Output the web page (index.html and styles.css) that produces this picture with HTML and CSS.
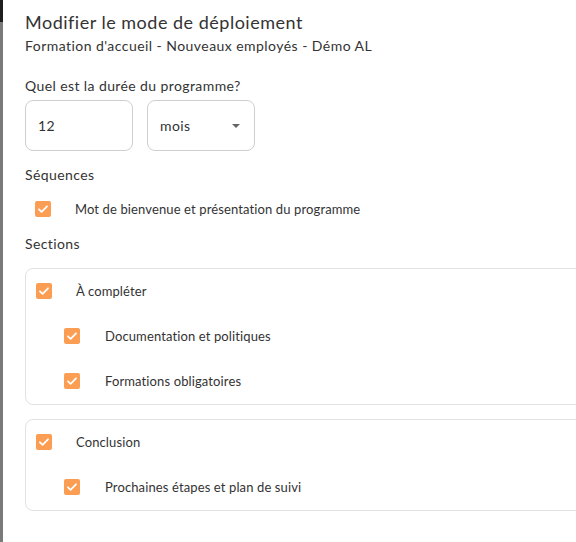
FILE: index.html
```html
<!DOCTYPE html>
<html lang="fr">
<head>
<meta charset="UTF-8" />
<title>Modifier le mode de déploiement</title>
<link rel="stylesheet" href="styles.css">
</head>
<body>
<div class="backdrop"><div class="backdrop-top"></div></div>

<div class="dialog">
  <h1>Modifier le mode de déploiement</h1>
  <p class="subtitle">Formation d'accueil - Nouveaux employés - Démo AL</p>

  <p class="label duration-label">Quel est la durée du programme?</p>
  <div class="duration">
    <div class="field">12</div>
    <div class="field select">mois <span class="caret"></span></div>
  </div>

  <p class="label">Séquences</p>
  <div class="check-row seq">
    <span class="cb"><svg viewBox="0 0 16 16"><path d="M4 8.3l2.6 2.5L12 5.3" /></svg></span>
    <span>Mot de bienvenue et présentation du programme</span>
  </div>

  <p class="label">Sections</p>

  <div class="section-box">
    <div class="check-row parent">
      <span class="cb"><svg viewBox="0 0 16 16"><path d="M4 8.3l2.6 2.5L12 5.3" /></svg></span>
      <span>À compléter</span>
    </div>
    <div class="check-row child">
      <span class="cb"><svg viewBox="0 0 16 16"><path d="M4 8.3l2.6 2.5L12 5.3" /></svg></span>
      <span>Documentation et politiques</span>
    </div>
    <div class="check-row child">
      <span class="cb"><svg viewBox="0 0 16 16"><path d="M4 8.3l2.6 2.5L12 5.3" /></svg></span>
      <span>Formations obligatoires</span>
    </div>
  </div>

  <div class="section-box">
    <div class="check-row parent">
      <span class="cb"><svg viewBox="0 0 16 16"><path d="M4 8.3l2.6 2.5L12 5.3" /></svg></span>
      <span>Conclusion</span>
    </div>
    <div class="check-row child">
      <span class="cb"><svg viewBox="0 0 16 16"><path d="M4 8.3l2.6 2.5L12 5.3" /></svg></span>
      <span>Prochaines étapes et plan de suivi</span>
    </div>
  </div>
</div>
</body>
</html>
```

FILE: styles.css
```css
html, body {
  margin: 0;
  height: 100%;
}
body {
  display: flex;
  background: #fff;
  font-family: "Lato", "Open Sans", sans-serif;
  color: #333;
  overflow: hidden;
}
.backdrop {
  width: 3px;
  flex: none;
  background: #7a7a7a;
}
.backdrop-top {
  height: 22px;
  background: #1e1e1e;
}
.dialog {
  flex: none;
  width: 620px;
  padding: 10px 0 0 22px;
}
h1 {
  margin: 0;
  font-size: 18px;
  font-weight: 400;
  line-height: 24px;
  letter-spacing: 0.5px;
  color: #333;
}
.subtitle {
  margin: 0;
  font-size: 14px;
  line-height: 24px;
  letter-spacing: 0.45px;
}
.label {
  margin: 0;
  font-size: 14px;
  line-height: 20px;
  letter-spacing: 0.4px;
}
.duration-label {
  margin-top: 18px;
}
.duration {
  display: flex;
  gap: 14px;
  margin: 4px 0 14px;
}
.field {
  box-sizing: border-box;
  width: 108px;
  height: 51px;
  border: 1px solid #cfcfcf;
  border-radius: 8px;
  padding: 0 0 0 12px;
  display: flex;
  align-items: center;
  font-size: 14px;
  letter-spacing: 0.4px;
}
.select {
  justify-content: space-between;
  padding-right: 12px;
}
.caret {
  width: 0;
  height: 0;
  border-left: 4px solid transparent;
  border-right: 4px solid transparent;
  border-top: 4px solid #666;
  margin-right: 2px;
}
.check-row {
  display: flex;
  align-items: center;
  font-size: 13px;
  height: 16px;
  letter-spacing: 0.12px;
}
.cb {
  width: 16px;
  height: 16px;
  border-radius: 2px;
  background: #fb9d52;
  flex: none;
}
.cb svg {
  display: block;
  width: 16px;
  height: 16px;
  fill: none;
  stroke: #fff;
  stroke-width: 1.8;
  stroke-linecap: round;
  stroke-linejoin: round;
}
.seq {
  margin: 16px 0 17px 10px;
}
.seq .cb {
  margin-right: 24px;
}
.section-box {
  border: 1px solid #e2e2e2;
  border-radius: 8px;
  padding: 14px 0 15px 10px;
  margin-top: 14px;
}
.section-box + .section-box {
  margin-top: 14px;
}
.parent .cb {
  margin-right: 24px;
}
.child {
  margin: 29px 0 0 28px;
}
.child .cb {
  margin-right: 25px;
}
```
